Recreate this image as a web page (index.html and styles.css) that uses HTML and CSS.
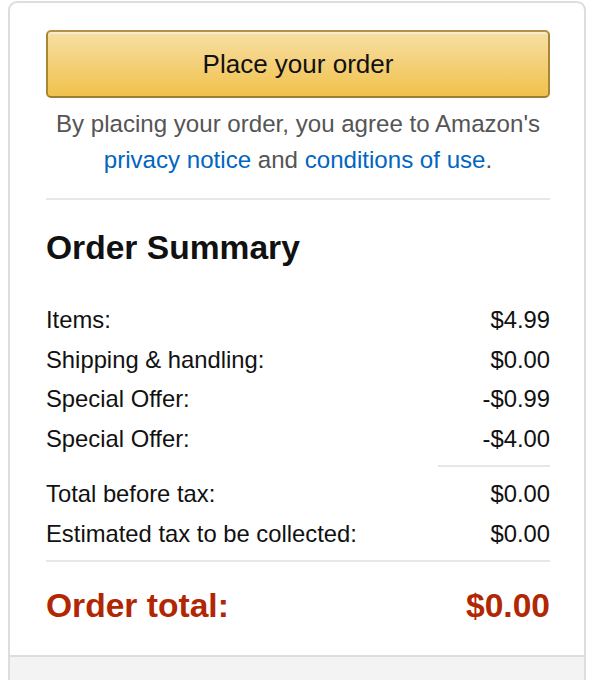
FILE: index.html
```html
<!DOCTYPE html>
<html lang="en">
<head>
<meta charset="utf-8">
<title>Order Summary</title>
<link rel="stylesheet" href="styles.css">
</head>
<body>
<div class="page">
  <div class="card">
    <div class="card-body">
      <button class="place-btn" type="button">Place your order</button>
      <p class="agree">By placing your order, you agree to Amazon's <a href="#">privacy notice</a> and <a href="#">conditions of use</a>.</p>
      <hr class="divider">
      <h2 class="title">Order Summary</h2>
      <div class="rows">
        <div class="row"><span>Items:</span><span>$4.99</span></div>
        <div class="row"><span>Shipping &amp; handling:</span><span>$0.00</span></div>
        <div class="row"><span>Special Offer:</span><span>-$0.99</span></div>
        <div class="row"><span>Special Offer:</span><span>-$4.00</span></div>
      </div>
      <hr class="divider short">
      <div class="rows">
        <div class="row"><span>Total before tax:</span><span>$0.00</span></div>
        <div class="row"><span>Estimated tax to be collected:</span><span>$0.00</span></div>
      </div>
      <hr class="divider total-div">
      <div class="row total"><span>Order total:</span><span>$0.00</span></div>
    </div>
    <div class="card-footer"></div>
  </div>
</div>
</body>
</html>
```
FILE: styles.css
```css
html, body {
  margin: 0;
  padding: 0;
  background: #fff;
}
body {
  font-family: "Liberation Sans", Arial, Helvetica, sans-serif;
  color: #111;
}
.page {
  padding: 1px 4px 0 8px;
}
.card {
  border: 2px solid #dddddd;
  border-bottom: none;
  border-radius: 9px 9px 0 0;
  overflow: hidden;
}
.card-body {
  padding: 27px 34px 29px 36px;
}
.place-btn {
  display: block;
  width: 100%;
  height: 68px;
  margin: 0;
  padding: 0;
  border: 2px solid #a88734;
  border-color: #b2914a #a88734 #9c7e31;
  border-radius: 5px;
  background: linear-gradient(to bottom, #f7dfa5, #f0c14b);
  box-shadow: inset 0 2px 0 rgba(255,255,255,0.4);
  font-family: "Liberation Sans", Arial, sans-serif;
  font-size: 26px;
  color: #111;
  cursor: pointer;
}
.agree {
  margin: 8px 0 0;
  text-align: center;
  font-size: 24.1px;
  line-height: 36px;
  color: #555;
}
.agree a {
  color: #0066c0;
  text-decoration: none;
}
.divider {
  border: none;
  height: 2px;
  background: #e7e7e7;
  margin: 20px 0 0;
}
.title {
  margin: 28px 0 0;
  font-size: 33.6px;
  line-height: 40px;
  font-weight: bold;
  color: #111;
}
.rows {
  margin-top: 32px;
}
.divider.short + .rows {
  margin-top: 7px;
}
.row {
  display: flex;
  justify-content: space-between;
  font-size: 23.8px;
  line-height: 39.7px;
  color: #111;
}
.divider.short {
  width: 112px;
  margin: 6px 0 0 auto;
}
.divider.total-div {
  margin-top: 7px;
}
.row.total {
  margin-top: 24px;
  font-size: 33.6px;
  line-height: 40px;
  font-weight: bold;
  color: #b12704;
}
.card-footer {
  border-top: 2px solid #dddddd;
  background: #f3f3f3;
  height: 40px;
}
```
